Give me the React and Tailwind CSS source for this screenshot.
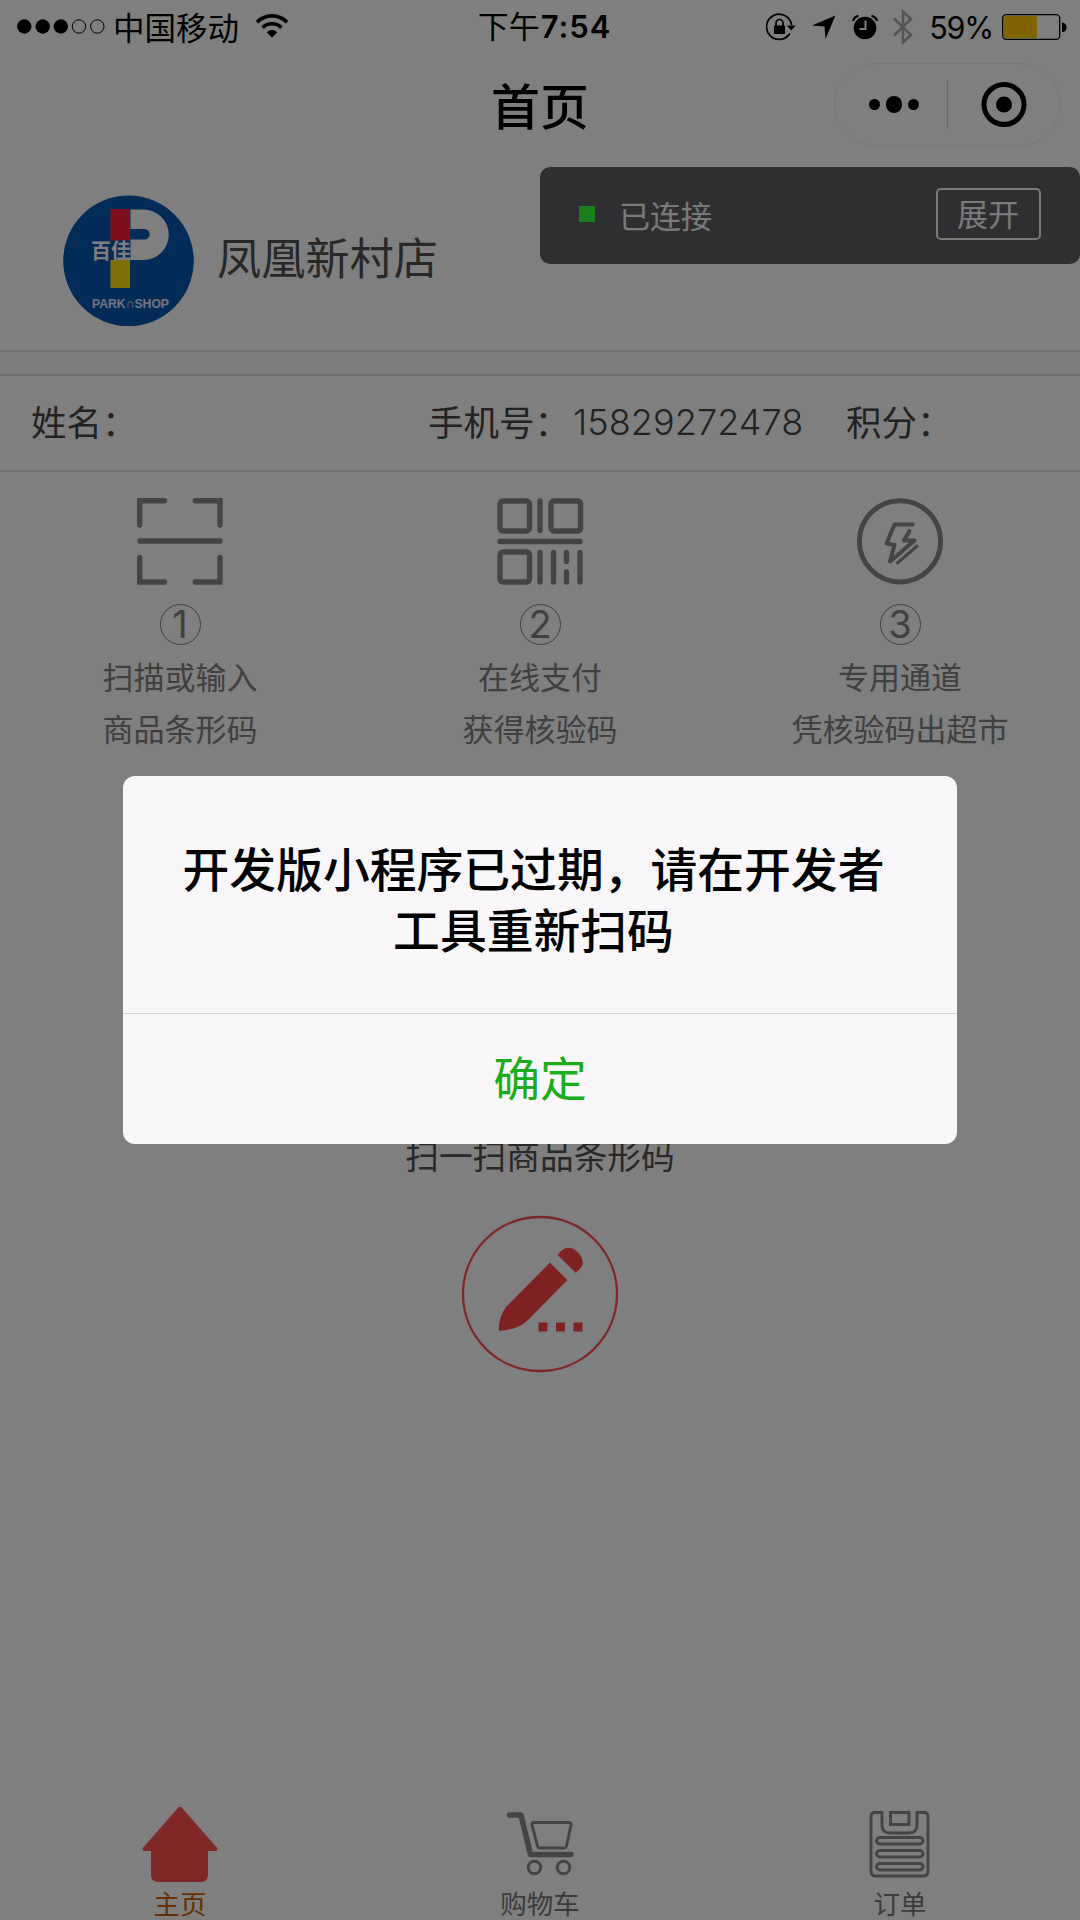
import React from "react";

const G = "#888888";

function StatusBar() {
  return (
    <div className="flex h-[54px] w-full items-center justify-between pl-[17px] pr-[13px] text-[31px] leading-[54px] text-black">
      <div className="flex w-[340px] items-center">
        <svg width="88" height="16" viewBox="0 0 88 16">
          <circle cx="7.3" cy="7.500" r="7.2" />
          <circle cx="25.7" cy="7.500" r="7.2" />
          <circle cx="43.8" cy="7.500" r="7.2" />
          <circle cx="62" cy="7.500" r="6.7" fill="none" stroke="#000" />
          <circle cx="80.3" cy="7.500" r="6.7" fill="none" stroke="#000" />
        </svg>
        <span className="-mt-[3px] ml-[8px] text-[31.500px]">中国移动</span>
        <svg className="-mt-[3px] ml-[17px]" width="32" height="24" viewBox="0 0 32 24">
          <path d="M1 8.2C9.5-.2 22.500-.2 31 8.200" fill="none" stroke="#000" strokeWidth="3.600" />
          <path d="M6.500 13.600C11.800 8.400 20.200 8.400 25.500 13.600" fill="none" stroke="#000" strokeWidth="3.600" />
          <path d="M10.800 18.200Q16 14 21.200 18.200L16 23.800Z" />
        </svg>
      </div>
      <div className="-mt-px ml-[5px] flex w-[133px] justify-center whitespace-nowrap">
        <span className="-mt-px">下午</span>
        <span className="ml-px mt-px font-['Inter'] text-[31px] font-semibold tracking-[0.900px]">7:54</span>
      </div>
      <div className="flex w-[340px] items-center justify-end">
        <svg width="30" height="28" viewBox="0 0 30 28">
          <path d="M23.800 20.500A12.600 12.600 0 1 1 25.600 12" fill="none" stroke="#000" strokeWidth="1.700" />
          <path d="M20.800 12.500H29.600L25.200 17.500Z" />
          <rect x="8" y="12.500" width="11" height="8.500" rx="0.800" />
          <path d="M10 13V10a3.500 3.500 0 0 1 7 0v3" fill="none" stroke="#000" strokeWidth="1.700" />
        </svg>
        <svg className="ml-[16px]" width="24" height="24" viewBox="0 0 24 24">
          <path d="M23.500 0.500L13.500 24L12.500 11.500L0 10.500Z" />
        </svg>
        <svg className="ml-[16px]" width="26" height="26" viewBox="0 0 26 26">
          <circle cx="13" cy="14" r="11.300" />
          <path d="M1 7A7 7 0 0 1 6.500 1.800M25 7A7 7 0 0 0 19.500 1.800" fill="none" stroke="#000" strokeWidth="2.200" />
          <path d="M13.500 6.500V15H7.500" fill="none" stroke="#fff" strokeWidth="2" />
        </svg>
        <svg className="ml-[14px]" width="22" height="36" viewBox="0 0 22 36">
          <path d="M2 9.500L19 26L11 33.500V2.500L19 10L2 26.500" fill="none" stroke="#aaaaaa" strokeWidth="2.500" />
        </svg>
        <span className="ml-[15.500px] mt-px font-['Inter'] text-[30.500px] tracking-[-1.200px]">59%</span>
        <svg className="ml-[9px]" width="65" height="26" viewBox="0 0 65 26">
          <rect x="0.700" y="0.700" width="57" height="24.600" rx="3.500" fill="none" stroke="#000" strokeWidth="1.300" />
          <rect x="2" y="2" width="33" height="22" rx="2" fill="#ffc800" />
          <path d="M60 8.500Q64.500 9 64.500 13.500T60 18Z" />
        </svg>
      </div>
    </div>
  );
}

function TitleBar() {
  return (
    <div className="grid h-[113px] grid-cols-3 items-start px-[19px] text-black">
      <div />
      <div className="mt-[15px] text-center text-[49px] font-medium leading-[70px]">首页</div>
      <div className="ml-auto mt-[9px] flex h-[83px] w-[227px] items-center rounded-full border border-[#efefef]">
        <div className="flex w-[112px] items-center justify-end gap-[6px] pr-[28.500px]">
          <i className="size-[10.500px] rounded-full bg-black" />
          <i className="size-[16.500px] rounded-full bg-black" />
          <i className="size-[10.500px] rounded-full bg-black" />
        </div>
        <div className="h-[49px] w-px bg-[#d4d4d4]" />
        <svg className="ml-[33px]" width="46" height="46" viewBox="0 0 46 46">
          <circle cx="23" cy="22.500" r="20" fill="none" stroke="#000" strokeWidth="5" />
          <circle cx="23" cy="22.500" r="8" />
        </svg>
      </div>
    </div>
  );
}

function Logo() {
  return (
    <svg width="131" height="132" viewBox="0 0 131 132">
      <circle cx="65.500" cy="65.800" r="65.300" fill="#0556b0" />
      <rect x="47.500" y="14" width="19.500" height="31.500" fill="#ff1e34" />
      <rect x="47.500" y="65" width="19.500" height="28" fill="#ffe01b" />
      <path d="M67 14.500H80A25.200 25.200 0 0 1 80 65H67V44.500H81a5 5 0 0 0 0-10.500H67Z" fill="#fff" transform="translate(0.500 0)" />
      <text x="28" y="62.500" fontSize="21" fontWeight="700" fill="#fff" textLength="40" lengthAdjust="spacingAndGlyphs">百佳</text>
      <text x="29" y="113" fontSize="13.500" fontWeight="700" fontFamily="Liberation Sans" fill="#e4eaff" textLength="77" lengthAdjust="spacingAndGlyphs">PARK∩SHOP</text>
    </svg>
  );
}

function ScanIcon() {
  return (
    <svg width="88" height="90" viewBox="0 0 88 90" fill="none" stroke={G} strokeWidth="5.400" strokeLinecap="round">
      <path d="M28.500 4.700H3.700V29M59.300 4.700H84V29M3.700 61.500V86H28.500M84 61.500V86H59.300M4 45H84" />
    </svg>
  );
}

function QrIcon() {
  return (
    <svg width="88" height="90" viewBox="0 0 88 90" fill="none" stroke={G} strokeWidth="5.400" strokeLinecap="round">
      <rect x="4" y="5" width="29.500" height="30" rx="3" />
      <rect x="55" y="5" width="29.500" height="30" rx="3" />
      <rect x="4" y="56" width="29.500" height="30" rx="3" />
      <path d="M44 5V34.500M4 45.500H84M44 56.500V86M57.500 56.500V86M70.500 56.500V65.500M70.500 76V86M84 56.500V86" />
    </svg>
  );
}

function FlashIcon() {
  return (
    <svg width="88" height="90" viewBox="0 0 88 90" fill="none" stroke={G} strokeLinecap="round" strokeLinejoin="round">
      <circle cx="44" cy="45.300" r="40.600" strokeWidth="5" />
      <path d="M56.500 28.500H38.500L30.500 47.500L38.500 49L34 65.500L58.500 44.500L48 44.500L53.500 35" strokeWidth="4" />
      <path d="M61 50L41.500 67" strokeWidth="3" />
    </svg>
  );
}

const steps = [
  { n: 1, Icon: ScanIcon, lines: ["扫描或输入", "商品条形码"] },
  { n: 2, Icon: QrIcon, lines: ["在线支付", "获得核验码"] },
  { n: 3, Icon: FlashIcon, lines: ["专用通道", "凭核验码出超市"] },
];

function Steps() {
  return (
    <div className="grid grid-cols-3 pt-[24px]">
      {steps.map(({ n, Icon, lines }) => (
        <div key={n} className="flex flex-col items-center text-[31px] leading-[52px] text-[#808080]">
          <Icon />
          <div className="mb-[5px] mt-[18px] flex size-[41px] items-center justify-center rounded-full border-[1.500px] border-[#808080] pb-px font-['Inter'] text-[38px] leading-none">
            {n}
          </div>
          {lines.map((t) => (
            <div key={t}>{t}</div>
          ))}
        </div>
      ))}
    </div>
  );
}

function TabBar() {
  return (
    <div className="grid h-[120px] grid-cols-3 text-[26.500px] leading-[36px] text-[#777]">
      <div className="flex flex-col items-center text-[#d35f00]">
        <svg width="78" height="85" viewBox="0 0 78 85">
          <path d="M39 8.500L74.500 49H65V75Q65 80 60 80H17Q12 80 12 75V49H3.500Z" fill="#ff5050" stroke="#ff5050" strokeWidth="4" strokeLinejoin="round" />
        </svg>
        主页
      </div>
      <div className="flex flex-col items-center">
        <svg width="78" height="85" viewBox="0 0 78 85" fill="none" stroke={G} strokeLinejoin="round" strokeLinecap="round">
          <path d="M8.500 15H20L29.500 54.500H70" strokeWidth="5.500" />
          <path d="M32.500 22.500H68Q70.500 22.500 70 25L65.500 46Q65 48 63 48H39Q37 48 36.500 46L31 25Q30.500 22.500 32.500 22.500Z" strokeWidth="2.900" />
          <circle cx="33.500" cy="67.500" r="6.300" strokeWidth="2.900" />
          <circle cx="62.500" cy="67.500" r="6.300" strokeWidth="2.900" />
        </svg>
        购物车
      </div>
      <div className="flex flex-col items-center">
        <svg width="78" height="85" viewBox="0 0 78 85" fill="none" stroke={G} strokeWidth="2.900">
          <path d="M21 12.500H14Q10 12.500 10 17V71Q10 76 14.500 76H62.500Q67 76 67 71V17Q67 12.500 63 12.500H56V25Q56 33 48 33H29Q21 33 21 25Z" />
          <rect x="29.500" y="12.500" width="18.500" height="12" />
          <rect x="15.500" y="37.500" width="46.500" height="6.500" rx="3.200" />
          <rect x="15.500" y="50.500" width="46.500" height="6.500" rx="3.200" />
          <rect x="15.500" y="63.500" width="46.500" height="6.500" rx="3.200" />
        </svg>
        订单
      </div>
    </div>
  );
}

function Modal() {
  return (
    <div className="absolute inset-0 flex items-start justify-center bg-black/50">
      <div className="mt-[776px] flex h-[367.500px] w-[834px] flex-col overflow-hidden rounded-[12px] bg-[#f9f7fa]">
        <div className="h-[238px] whitespace-nowrap border-b border-[#d3d2d5] pr-[13px] pt-[60px] text-center text-[46.800px] font-medium leading-[61px] text-black">
          开发版小程序已过期，请在开发者
          <br />
          工具重新扫码
        </div>
        <div className="flex-1 text-center text-[46.800px] leading-[124px] text-[#1aad19]">确定</div>
      </div>
    </div>
  );
}

export default function App() {
  return (
    <div className="relative flex h-[1920px] w-[1080px] flex-col overflow-hidden bg-white font-['Noto_Sans_CJK_SC',sans-serif] font-normal">
      <StatusBar />
      <TitleBar />
      <div className="flex h-[183px] justify-between">
        <div className="flex pl-[62.500px] pt-[28px]">
          <Logo />
          <span className="ml-[23.500px] mt-[30px] text-[44.200px] leading-[63px] text-[#505050]">凤凰新村店</span>
        </div>
        <div className="flex h-[97px] w-[540px] items-center rounded-[10px] bg-[#5f5f62] pl-[39px] pr-[39px] text-[31px] text-[#f4f4f4]">
          <i className="mb-[3px] size-[16px] bg-[#35ff35]" />
          <span className="ml-[24px]">已连接</span>
          <span className="mb-[3px] ml-auto flex h-[52px] w-[105px] items-center justify-center rounded-[5px] border-2 border-[#f4f4f4] pb-[2px] pr-px">展开</span>
        </div>
      </div>
      <div className="h-[26px] border-y-2 border-[#dedede] bg-[#f9f9f9]" />
      <div className="flex h-[96px] items-center border-b-2 border-[#dedede] pb-[4px] text-[35.500px] text-[#444]">
        <span className="w-[397px] pl-[31px]">姓名：</span>
        <span className="flex w-[418px] items-center pl-[31px]">
          手机号：
          <span className="ml-[3px] mt-[2px] font-['Inter'] text-[36px] font-light tracking-[0.100px]">15829272478</span>
        </span>
        <span className="pl-[31px]">积分：</span>
      </div>
      <Steps />
      <div className="mt-[376px] text-center text-[33.700px] leading-[50px] text-[#505050]">扫一扫商品条形码</div>
      <div className="mt-[35px] flex justify-center">
        <svg width="158" height="158" viewBox="0 0 158 158" fill="#ff4446">
          <circle cx="79" cy="79" r="77" fill="none" stroke="#ff4c50" strokeWidth="2.300" />
          <path d="M89 47.500L106.500 65L66 106Q58 114 38 116Q37 103 45 92Z" />
          <path d="M96.700 40Q101 33 107.500 32.700Q114 33 118.500 39Q122.500 44 121.500 50Q120 54 114.500 57.700Z" />
          <path d="M77.500 107.500h9v9h-9zM95 107.500h9v9h-9zM112.500 107.500h9v9h-9z" />
        </svg>
      </div>
      <div className="flex-1" />
      <TabBar />
      <Modal />
    </div>
  );
}
